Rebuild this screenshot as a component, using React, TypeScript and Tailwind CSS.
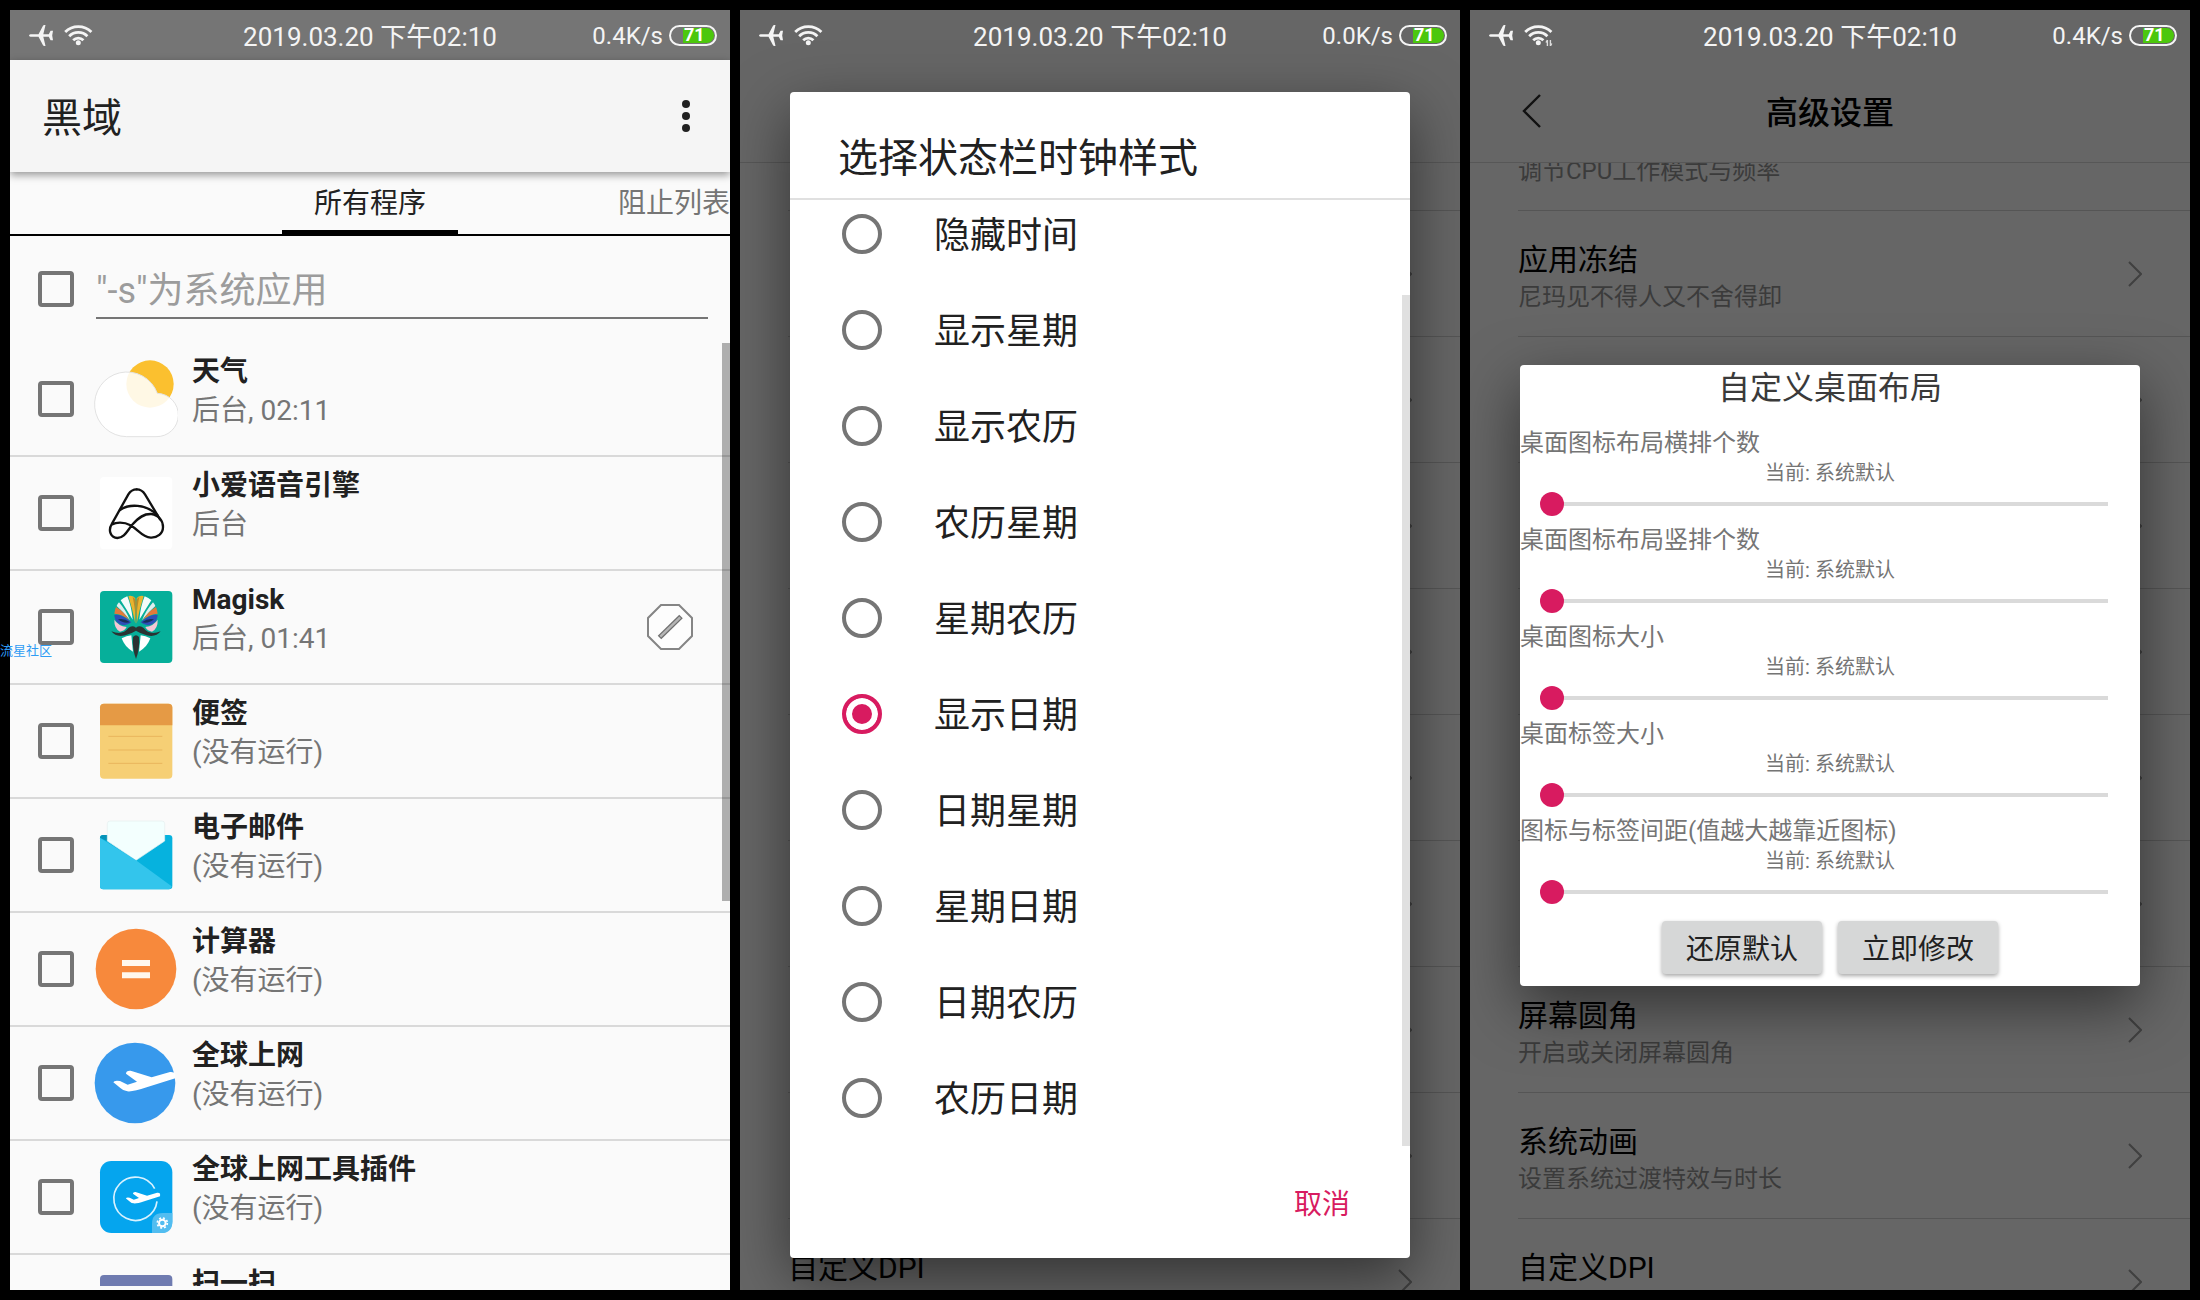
import { useState } from "react";
import type { ReactNode } from "react";

const clockStyles = [
  "隐藏时间",
  "显示星期",
  "显示农历",
  "农历星期",
  "星期农历",
  "显示日期",
  "日期星期",
  "星期日期",
  "日期农历",
  "农历日期",
];

const layoutOptions = [
  "桌面图标布局横排个数",
  "桌面图标布局竖排个数",
  "桌面图标大小",
  "桌面标签大小",
  "图标与标签间距(值越大越靠近图标)",
];

type Setting = { title?: string; note?: string };

const clockSettings: Setting[] = [{}, {}, {}, {}, {}, {}, {}, {}, {}, { title: "自定义DPI" }];

const advancedSettings: Setting[] = [
  { note: "调节CPU工作模式与频率" },
  { title: "应用冻结", note: "尼玛见不得人又不舍得卸" },
  {},
  {},
  {},
  {},
  {},
  { title: "屏幕圆角", note: "开启或关闭屏幕圆角" },
  { title: "系统动画", note: "设置系统过渡特效与时长" },
  { title: "自定义DPI" },
];

const PLANE =
  "M58 124 Q60 117 78 120 L101 131 L129 122 L96 98 Q96 88 110 89 L173 109 L228 93 Q240 92 244 98 V112 L158 139 Q118 153 100 151 Q88 150 80 142 Z";

function AppIcon({ children }: { children: ReactNode }) {
  return (
    <svg viewBox="0 0 252 252" className="size-[84px] shrink-0" aria-hidden="true">
      {children}
    </svg>
  );
}

function WeatherIcon() {
  return (
    <AppIcon>
      <circle cx="168" cy="81" r="71" fill="#fbc02f" />
      <path
        d="M98 239 A97 97 0 1 1 190 109 A64 64 0 0 1 186 239 Z"
        fill="#fff"
        fillOpacity="0.88"
        stroke="#e2e2e2"
        strokeWidth="3"
      />
    </AppIcon>
  );
}

function VoiceIcon() {
  return (
    <AppIcon>
      <rect x="18" y="18" width="217" height="217" rx="12" fill="#fff" />
      <g fill="none" stroke="#111" strokeWidth="7" strokeLinecap="round">
        <path d="M128 55C115 55 108 62 103 70L54 158C40 180 52 201 70 201C92 201 100 178 116 160C135 138 150 128 172 129C195 132 207 150 207 168C207 188 190 201 170 200C135 198 125 155 78 155C68 155 60 157 54 160" />
        <path d="M128 55C141 55 148 62 153 70L198 145" />
        <path d="M78 117C105 98 155 98 190 132" />
      </g>
    </AppIcon>
  );
}

// One half of the mask, drawn twice with the second copy mirrored
function MaskHalf() {
  return (
    <>
      <path d="M100 34Q88 38 80 46Q98 74 116 104Q112 62 100 34Z" fill="#f4fbfa" />
      <path d="M75 52Q70 57 68 63Q88 80 108 106Q96 76 75 52Z" fill="#dfeeed" />
      <path d="M66 66Q62 76 61 86Q84 86 106 106Q90 80 66 66Z" fill="#e2793a" />
      <path d="M61 90Q84 86 112 112Q92 128 72 114Q62 106 61 90Z" fill="#2c4fb8" />
      <path d="M72 103Q90 98 108 112Q88 117 72 103Z" fill="#17305c" />
      <path d="M61 104Q60 130 78 140Q92 138 98 126Q72 122 61 104Z" fill="#f5c6d4" />
      <path d="M103 33Q118 30 124 40V116Q116 74 103 33Z" fill="#e9b32e" />
      <path d="M116 36Q122 38 125 48V100Q122 62 116 36Z" fill="#b98a2a" />
      <path d="M83 160Q98 152 112 151L117 200Q92 186 83 160Z" fill="#fff" />
      <path
        d="M126 128Q114 119 103 129Q86 152 52 139Q66 158 94 151Q114 145 126 137Z"
        fill="#2b3333"
      />
    </>
  );
}

function MagiskIcon() {
  return (
    <AppIcon>
      <rect x="18" y="18" width="217" height="216" rx="12" fill="#06af9a" />
      <MaskHalf />
      <g transform="matrix(-1 0 0 1 252 0)">
        <MaskHalf />
      </g>
      <path d="M117 156Q126 146 135 156Q138 190 126 222Q114 190 117 156Z" fill="#2b3333" />
    </AppIcon>
  );
}

function NotesIcon() {
  return (
    <AppIcon>
      <rect x="18" y="14" width="217" height="225" rx="12" fill="#f6cf75" />
      <path d="M18 79V26Q18 14 30 14H223Q235 14 235 26V79Z" fill="#e59a45" />
      <path d="M43 112H205M43 153H205M43 193H205" stroke="#e9b55c" strokeWidth="3" />
    </AppIcon>
  );
}

function MailIcon() {
  return (
    <AppIcon>
      <rect x="18" y="66" width="217" height="163" rx="10" fill="#06b2de" />
      <path d="M18 76Q18 66 28 66H40V84L18 76Z" fill="#0592b8" />
      <path
        d="M40 84V32Q40 24 48 24H204Q212 24 212 32V84L126 142Z"
        fill="#f3fffe"
        stroke="#e6eeee"
        strokeWidth="2"
      />
      <path d="M18 74L126 142L233 220Q232 229 224 229H28Q18 229 18 219Z" fill="#33c5ec" />
    </AppIcon>
  );
}

function CalculatorIcon() {
  return (
    <AppIcon>
      <circle cx="126" cy="126" r="121" fill="#f7893c" />
      <path d="M84 108H168M84 145H168" stroke="#fff8ee" strokeWidth="18" />
    </AppIcon>
  );
}

function RoamingIcon() {
  return (
    <AppIcon>
      <circle cx="123" cy="126" r="121" fill="#3799ec" />
      <path d={PLANE} fill="#fff" />
    </AppIcon>
  );
}

function RoamingPluginIcon() {
  return (
    <AppIcon>
      <rect x="18" y="18" width="217" height="216" rx="34" fill="#05a5ee" />
      <path
        d="M182 101A65 65 0 1 0 189 139"
        fill="none"
        stroke="#d8f2ff"
        strokeWidth="5"
      />
      <path d={PLANE} fill="#fff" transform="translate(64 62) scale(0.55)" />
      <path d="M174 234V206Q174 174 206 174H235V200Q235 234 201 234Z" fill="#52bdf0" />
      <circle cx="205" cy="204" r="10" fill="none" stroke="#fff" strokeWidth="6" />
      <circle
        cx="205"
        cy="204"
        r="15"
        fill="none"
        stroke="#fff"
        strokeWidth="5"
        strokeDasharray="6 5.78"
      />
    </AppIcon>
  );
}

function ScanIcon() {
  return (
    <AppIcon>
      <rect x="18" y="18" width="217" height="217" rx="12" fill="#6f7bb0" />
    </AppIcon>
  );
}

const apps = [
  { name: "天气", status: "后台, 02:11", icon: <WeatherIcon /> },
  { name: "小爱语音引擎", status: "后台", icon: <VoiceIcon /> },
  { name: "Magisk", status: "后台, 01:41", icon: <MagiskIcon />, blocked: true },
  { name: "便签", status: "(没有运行)", icon: <NotesIcon /> },
  { name: "电子邮件", status: "(没有运行)", icon: <MailIcon /> },
  { name: "计算器", status: "(没有运行)", icon: <CalculatorIcon /> },
  { name: "全球上网", status: "(没有运行)", icon: <RoamingIcon /> },
  { name: "全球上网工具插件", status: "(没有运行)", icon: <RoamingPluginIcon /> },
  { name: "扫一扫", status: "", icon: <ScanIcon /> },
];

function StatusBar({ speed, activity = false }: { speed: string; activity?: boolean }) {
  return (
    <div className="grid h-[50px] shrink-0 grid-cols-[1fr_auto_1fr] items-center px-[13px] text-[#f4f4f4]">
      <div className="flex items-center gap-[11px] pl-[6px]">
        <svg viewBox="0 0 24 21" className="h-[21px] w-6" fill="currentColor" aria-hidden="true">
          <path d="M1.5 9.2H9.5L14 .8Q14.4 0 15.4 0H16.5L14.3 9.2H19.8L21.6 5.8H24L23.2 10.5L24 15.2H21.6L19.8 11.8H14.3L16.5 21H15.4Q14.4 21 14 20.2L9.5 11.8H1.5Q0 11.5 0 10.5Q0 9.5 1.5 9.2Z" />
        </svg>
        <svg viewBox="0 0 30 22" className="h-[22px] w-[30px]" fill="none" aria-hidden="true">
          <g stroke="currentColor" strokeWidth="2.8">
            <path d="M1.2 8A18.5 18.5 0 0 1 27.4 8" />
            <path d="M5.2 12.2A12.8 12.8 0 0 1 23.4 12.2" />
            <path d="M9.2 16.2A7.2 7.2 0 0 1 19.4 16.2" />
          </g>
          <circle cx="14.3" cy="18.8" r="2.5" fill="currentColor" />
          {activity && (
            <path d="M23.4 16V22M26.4 16V22M22 18.5L23.4 16M27.8 19.5L26.4 22" stroke="#ddd" strokeWidth="1.4" />
          )}
        </svg>
      </div>
      <p className="pt-1 text-[26px] leading-8">2019.03.20 下午02:10</p>
      <div className="flex items-center justify-end gap-[6px]">
        <span className="pt-[2px] text-2xl">{speed}</span>
        <span className="flex h-[21px] w-12 rounded-full border-2 border-current py-px pr-px pl-3">
          <span className="flex flex-1 items-center rounded-r-full bg-[#4cc70d] pl-px text-lg leading-4 font-bold text-white">
            71
          </span>
        </span>
      </div>
    </div>
  );
}

function AppList() {
  return (
    <section className="relative flex min-w-0 flex-1 flex-col overflow-hidden bg-[#fafafa]">
      <div className="bg-[#757575]">
        <StatusBar speed="0.4K/s" />
      </div>
      <header className="relative flex h-28 shrink-0 items-center justify-between bg-[#f5f5f5] pr-6 pl-8 shadow-[0_3px_8px_rgba(0,0,0,0.4)]">
        <h1 className="pt-[6px] text-[40px] text-[#212121]">黑域</h1>
        <button type="button" aria-label="更多选项" className="flex flex-col gap-1 px-4 py-2">
          <span className="size-2 rounded-full bg-[#212121]" />
          <span className="size-2 rounded-full bg-[#212121]" />
          <span className="size-2 rounded-full bg-[#212121]" />
        </button>
      </header>
      <nav className="grid h-16 shrink-0 grid-cols-[1fr_auto_1fr] items-start border-b-2 border-black text-[28px] leading-[52px] whitespace-nowrap">
        <button
          type="button"
          className="col-start-2 border-b-4 border-black px-8 pt-[6px] text-[#212121]"
        >
          所有程序
        </button>
        <button type="button" className="justify-self-end pt-[6px] text-[#757575]">
          阻止列表
        </button>
      </nav>
      <div className="flex shrink-0 items-center gap-[22px] pt-[23px] pr-[22px] pb-6 pl-7">
        <input
          type="checkbox"
          aria-label="全选"
          className="size-9 shrink-0 appearance-none rounded border-4 border-[#757575] checked:bg-[#757575]"
        />
        <input
          type="text"
          aria-label="搜索应用"
          placeholder={'"-s"为系统应用'}
          className="h-[60px] min-w-0 flex-1 border-b-2 border-[#757575] bg-transparent pt-[6px] text-4xl outline-none placeholder:text-[#9c9c9c]"
        />
      </div>
      <div className="relative mb-1 min-h-0 flex-1 overflow-hidden">
        <ul>
          {apps.map((app) => (
            <li key={app.name} className="border-b-2 border-[#d9d9d9]">
              <label className="flex h-28 items-center pr-[37px] pl-7">
                <input
                  type="checkbox"
                  className="mr-5 size-9 shrink-0 appearance-none rounded border-4 border-[#757575] checked:bg-[#757575]"
                />
                {app.icon}
                <span className="ml-[14px] flex h-full min-w-0 flex-1 flex-col pt-[9px] text-[28px] leading-[39px]">
                  <span className="font-bold text-[#212121]">{app.name}</span>
                  <span className="text-[#757575]">{app.status}</span>
                </span>
                {app.blocked && (
                  <svg viewBox="0 0 46 46" className="size-[46px]" fill="none" aria-hidden="true">
                    <path
                      d="M14 1H32L45 14V32L32 45H14L1 32V14Z"
                      fill="#fdfdfd"
                      stroke="#858585"
                      strokeWidth="2"
                    />
                    <path d="M12.5 33.5L34 12.5" stroke="#6f6f6f" strokeWidth="5" />
                    <path d="M13.3 32.7L33.2 13.3" stroke="#b5b5b5" strokeWidth="2.4" />
                  </svg>
                )}
              </label>
            </li>
          ))}
        </ul>
        <div className="absolute top-0 right-0 h-[558px] w-2 bg-black/30" />
      </div>
    </section>
  );
}

type SettingsScreenProps = {
  title?: string;
  speed: string;
  activity?: boolean;
  settings: Setting[];
  children: ReactNode;
};

function SettingsScreen({ title, speed, activity, settings, children }: SettingsScreenProps) {
  return (
    <section className="flex min-w-0 flex-1 flex-col overflow-hidden bg-[#666]">
      <StatusBar speed={speed} activity={activity} />
      <div className="relative flex min-h-0 flex-1 flex-col">
        <header className="relative z-10 grid h-[103px] shrink-0 grid-cols-[1fr_auto_1fr] items-center border-b border-[#575757] bg-[#666] px-[52px]">
          {title && (
            <>
              <button type="button" aria-label="返回" className="w-5">
                <svg viewBox="0 0 20 34" className="h-[34px] w-5" fill="none" aria-hidden="true">
                  <path d="M18 1L2 17L18 33" stroke="#111" strokeWidth="2.4" />
                </svg>
              </button>
              <h2 className="pt-1 text-[32px] font-medium text-black">{title}</h2>
            </>
          )}
        </header>
        <ul className="-mt-[78px] min-h-0 flex-1 overflow-hidden pl-12">
          {settings.map((item, i) => (
            <li
              key={i}
              className="flex h-[126px] items-center justify-between border-b border-[#555] pr-12"
            >
              <div className="flex h-full flex-col pt-7">
                <span className="h-[42px] text-[30px] leading-[42px] text-black">{item.title}</span>
                <span className="text-2xl text-[#3b3b3b]">{item.note}</span>
              </div>
              <svg viewBox="0 0 14 26" className="h-[26px] w-[14px]" fill="none" aria-hidden="true">
                <path d="M1 1L13 13L1 25" stroke="#404040" strokeWidth="2" />
              </svg>
            </li>
          ))}
        </ul>
        <div className="absolute inset-0 z-20 flex items-center px-[50px]">{children}</div>
      </div>
    </section>
  );
}

function ClockStyleDialog() {
  const [selected, setSelected] = useState("显示日期");

  return (
    <div
      role="dialog"
      aria-label="选择状态栏时钟样式"
      className="flex-1 rounded bg-white text-[#212121] shadow-[0_20px_60px_rgba(0,0,0,0.5)]"
    >
      <h2 className="border-b-2 border-[#e0e0e0] px-12 pt-[38px] pb-[10px] text-[40px] leading-[58px]">
        选择状态栏时钟样式
      </h2>
      <div className="relative overflow-hidden">
        <div className="-mt-[14px]">
          {clockStyles.map((name) => (
            <label key={name} className="flex h-24 items-center gap-[52px] pl-[52px] text-4xl">
              <input
                type="radio"
                name="clock-style"
                checked={selected === name}
                onChange={() => setSelected(name)}
                className="size-10 shrink-0 appearance-none rounded-full border-4 border-[#757575] checked:border-[#d81b60] checked:bg-[#d81b60] checked:shadow-[inset_0_0_0_6px_white]"
              />
              <span className="pt-1">{name}</span>
            </label>
          ))}
        </div>
        <div className="absolute right-0 bottom-0 h-[851px] w-2 bg-[#e0e0e0]" />
      </div>
      <div className="flex h-28 items-center justify-end pr-[60px]">
        <button type="button" className="pt-[6px] text-[28px] text-[#d81b60]">
          取消
        </button>
      </div>
    </div>
  );
}

function LayoutDialog() {
  return (
    <div
      role="dialog"
      aria-label="自定义桌面布局"
      className="flex-1 rounded bg-white pb-3 shadow-[0_20px_60px_rgba(0,0,0,0.5)]"
    >
      <h2 className="mb-4 text-center text-[32px] leading-[46px] text-[#3a3a3a]">自定义桌面布局</h2>
      <div className="flex flex-col gap-[3px] text-[#757575]">
        {layoutOptions.map((name, i) => (
          <div key={name}>
            <label htmlFor={`layout-${i}`} className="block text-2xl leading-8">
              {name}
            </label>
            <p className="text-center text-xl leading-7">当前: 系统默认</p>
            <div className="flex h-[34px] items-center px-5">
              <input
                id={`layout-${i}`}
                type="range"
                min={0}
                max={10}
                defaultValue={0}
                className="h-6 w-full appearance-none bg-transparent bg-[linear-gradient(#dadada,#dadada)] bg-[length:calc(100%-24px)_4px] bg-center bg-no-repeat [&::-webkit-slider-thumb]:size-6 [&::-webkit-slider-thumb]:appearance-none [&::-webkit-slider-thumb]:rounded-full [&::-webkit-slider-thumb]:bg-[#d81b60]"
              />
            </div>
          </div>
        ))}
      </div>
      <div className="mt-3 flex justify-center gap-4 text-[28px] text-[#212121]">
        <button
          type="button"
          className="h-[53px] w-40 rounded-sm bg-[#d6d7d7] pt-[6px] shadow-[0_2px_4px_rgba(0,0,0,0.35)]"
        >
          还原默认
        </button>
        <button
          type="button"
          className="h-[53px] w-40 rounded-sm bg-[#d6d7d7] pt-[6px] shadow-[0_2px_4px_rgba(0,0,0,0.35)]"
        >
          立即修改
        </button>
      </div>
    </div>
  );
}

export default function App() {
  return (
    <main className="relative flex h-screen gap-[10px] overflow-hidden bg-black p-[10px] font-[Roboto,'Noto_Sans_CJK_SC',sans-serif]">
      <AppList />
      <SettingsScreen speed="0.0K/s" settings={clockSettings}>
        <ClockStyleDialog />
      </SettingsScreen>
      <SettingsScreen title="高级设置" speed="0.4K/s" settings={advancedSettings} activity>
        <LayoutDialog />
      </SettingsScreen>
      <span className="absolute top-[641px] left-0 text-[13px] leading-5 text-[#2f9cf4]">流星社区</span>
    </main>
  );
}
